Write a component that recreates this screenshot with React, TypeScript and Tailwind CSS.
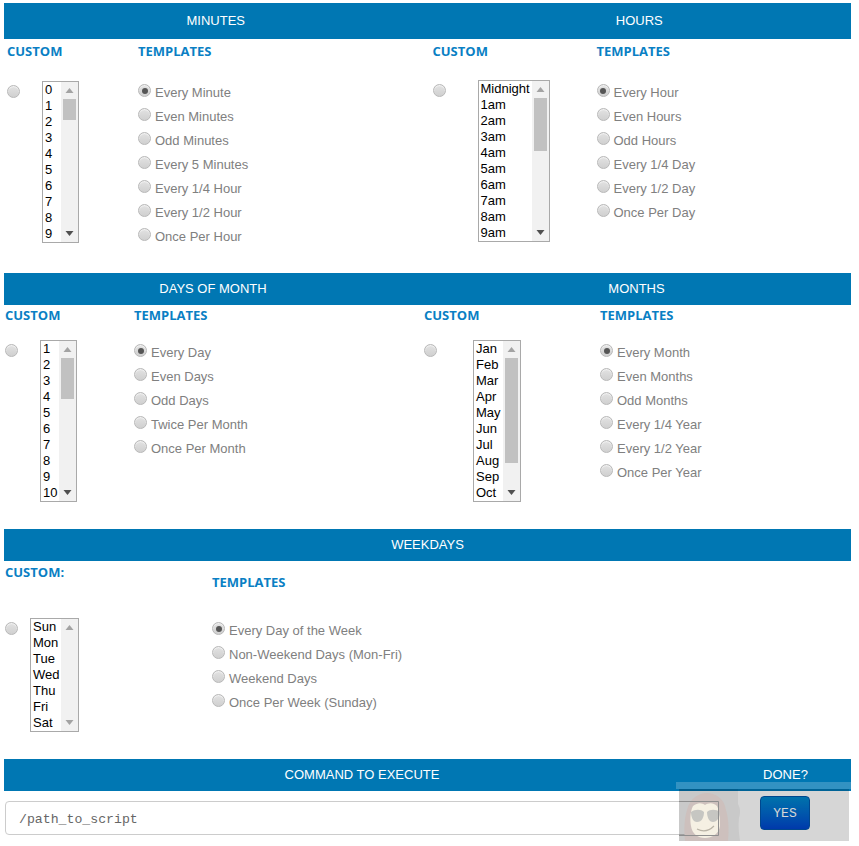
const arial = "font-['Liberation_Sans',Arial,sans-serif]"

function Radio({ checked = false }: { checked?: boolean }) {
  return (
    <span className="mt-[4px] flex h-[13px] w-[13px] shrink-0 items-center justify-center rounded-full border border-[#b8b8b8] bg-linear-to-b from-[#e2e2e2] to-[#d0d0d0] shadow-[inset_0_1px_1px_#f4f4f4]">
      {checked && <span className="h-[6px] w-[6px] rounded-full bg-[#555555]" />}
    </span>
  )
}

function Arrow({ up = false, dim = false }: { up?: boolean; dim?: boolean }) {
  return (
    <svg width="17" height="17" viewBox="0 0 17 17" className="shrink-0">
      <path d={up ? "M8.5 6L12.5 11H4.5Z" : "M8.5 11L12.5 6H4.5Z"} fill={up || dim ? "#a3a3a3" : "#505050"} />
    </svg>
  )
}

type ListProps = {
  items: string[]
  width: string
  thumb?: string
  gapLeft: string
}

function ListBox({ items, width, thumb, gapLeft }: ListProps) {
  return (
    <div className={`${width} ${gapLeft} flex shrink-0 border border-[#a9a9a9] bg-white`}>
      <div className="min-w-0 flex-1 pl-[2px] text-[13px] leading-[16px] text-black whitespace-nowrap">
        {items.map((item) => (
          <div key={item} className="h-[16px]">{item}</div>
        ))}
      </div>
      <div className="flex w-[17px] shrink-0 flex-col bg-[#f1f1f1]">
        <Arrow up />
        {thumb && <div className={`${thumb} mx-[2px] w-[13px] bg-[#c1c1c1]`} />}
        <div className="flex-1" />
        <Arrow dim={!thumb} />
      </div>
    </div>
  )
}

type PanelProps = {
  customLabel?: string
  customClass: string
  customHead: string
  topGap: string
  templatesHead: string
  templates: string[]
  list: ListProps
}

function Panel({ customLabel = "CUSTOM", customClass, customHead, topGap, templatesHead, templates, list }: PanelProps) {
  const heading = "font-['Open_Sans',sans-serif] text-[13px] font-bold text-[#0a7fc4]"
  return (
    <div className="flex">
      <div className={`${customClass} shrink-0`}>
        <div className={`${customHead} ${heading}`}>{customLabel}</div>
        <div className={`${topGap} flex items-start`}>
          <Radio />
          <ListBox {...list} />
        </div>
      </div>
      <div>
        <div className={`${templatesHead} ${heading}`}>TEMPLATES</div>
        {templates.map((label, i) => (
          <div key={label} className="flex h-[24px] items-start gap-[4px] text-[13px] leading-[24px] text-[#808080]">
            <Radio checked={i === 0} />
            <span className="pt-[1px]">{label}</span>
          </div>
        ))}
      </div>
    </div>
  )
}

function Bar({ children, className }: { children: React.ReactNode; className: string }) {
  return (
    <div className={`${className} grid bg-[#0077b3] text-center text-[13px] text-white`}>
      {children}
    </div>
  )
}

function Monkey() {
  return (
    <svg viewBox="679 789 170 52" width="170" height="52" className="absolute top-0 left-0">
      <path d="M679 789H738V804C740 808 741 812 739 818C738 826 739 834 740 841H679Z" fill="#000" fillOpacity="0.06" />
      <path d="M685 841C684 830 684 820 687 810C690 798 699 793 707 793C715 793 724 798 726 810C729 820 729 832 728 841Z" fill="#cdc0bd" />
      <path d="M693 806C698 802 702 803 705 805C708 803 713 802 717 806C720 812 720 820 720 826C719 834 712 838 705 838C698 838 692 834 691 826C690 820 690 812 693 806Z" fill="#f5f0e3" />
      <path d="M691 812C695 809 701 809 704 812C704 817 702 822 697 822C693 822 691 817 691 812ZM707 812C710 809 716 809 720 812C720 817 717 822 713 822C709 822 707 817 707 812Z" fill="#c6c6c2" />
      <path d="M697 829C703 832 709 831 714 826" fill="none" stroke="#b9b3a6" strokeWidth="1.2" />
      <path d="M679 801.5H718.5V835.5H679" fill="none" stroke="#8f8f8f" />
    </svg>
  )
}

export default function App() {
  return (
    <div className={`${arial} relative min-h-[846px] bg-white`}>
      <div className="ml-[4px] w-[847px] pt-[3px]">
        <Bar className="h-[36px] grid-cols-2 items-center">
          <div>MINUTES</div>
          <div>HOURS</div>
        </Bar>
        <div className="grid h-[234px] grid-cols-2">
          <Panel
            customClass="w-[134px] pl-[3px]"
            customHead="h-[24px] leading-[24px]"
            topGap="mt-[18px]"
            templatesHead="h-[41px] leading-[24px]"
            templates={["Every Minute", "Even Minutes", "Odd Minutes", "Every 5 Minutes", "Every 1/4 Hour", "Every 1/2 Hour", "Once Per Hour"]}
            list={{
              items: ["0", "1", "2", "3", "4", "5", "6", "7", "8", "9"],
              width: "w-[37px]",
              thumb: "h-[21px]",
              gapLeft: "ml-[22px]",
            }}
          />
          <Panel
            customClass="w-[169px] pl-[5px]"
            customHead="h-[24px] leading-[24px]"
            topGap="mt-[17px]"
            templatesHead="h-[41px] leading-[24px]"
            templates={["Every Hour", "Even Hours", "Odd Hours", "Every 1/4 Day", "Every 1/2 Day", "Once Per Day"]}
            list={{
              items: ["Midnight", "1am", "2am", "3am", "4am", "5am", "6am", "7am", "8am", "9am"],
              width: "w-[72px]",
              thumb: "h-[53px]",
              gapLeft: "ml-[32px]",
            }}
          />
        </div>

        <Bar className="h-[32px] grid-cols-[418px_429px] items-center">
          <div>DAYS OF MONTH</div>
          <div>MONTHS</div>
        </Bar>
        <div className="grid h-[224px] grid-cols-[418px_429px]">
          <Panel
            customClass="w-[130px] pl-[1px]"
            customHead="h-[20px] leading-[20px]"
            topGap="mt-[15px]"
            templatesHead="h-[35px] leading-[20px]"
            templates={["Every Day", "Even Days", "Odd Days", "Twice Per Month", "Once Per Month"]}
            list={{
              items: ["1", "2", "3", "4", "5", "6", "7", "8", "9", "10"],
              width: "w-[37px]",
              thumb: "h-[41px]",
              gapLeft: "ml-[22px]",
            }}
          />
          <Panel
            customClass="w-[178px] pl-[2px]"
            customHead="h-[20px] leading-[20px]"
            topGap="mt-[15px]"
            templatesHead="h-[35px] leading-[20px]"
            templates={["Every Month", "Even Months", "Odd Months", "Every 1/4 Year", "Every 1/2 Year", "Once Per Year"]}
            list={{
              items: ["Jan", "Feb", "Mar", "Apr", "May", "Jun", "Jul", "Aug", "Sep", "Oct"],
              width: "w-[48px]",
              thumb: "h-[105px]",
              gapLeft: "ml-[36px]",
            }}
          />
        </div>

        <Bar className="h-[32px] items-center">
          <div>WEEKDAYS</div>
        </Bar>
        <div className="h-[198px]">
          <Panel
            customLabel="CUSTOM:"
            customClass="w-[208px] pl-[1px]"
            customHead="h-[22px] leading-[22px]"
            topGap="mt-[35px]"
            templatesHead="h-[57px] pt-[10px] leading-[22px]"
            templates={["Every Day of the Week", "Non-Weekend Days (Mon-Fri)", "Weekend Days", "Once Per Week (Sunday)"]}
            list={{
              items: ["Sun", "Mon", "Tue", "Wed", "Thu", "Fri", "Sat"],
              width: "w-[49px]",
              gapLeft: "ml-[12px]",
            }}
          />
        </div>

        <Bar className="h-[32px] grid-cols-[716px_131px] items-center">
          <div>COMMAND TO EXECUTE</div>
          <div>DONE?</div>
        </Bar>
        <div className="flex items-start">
          <div className="mt-[10px] ml-[1px] flex h-[34px] w-[714px] items-center rounded-[4px] border border-[#cccccc] pt-[3px] pl-[13px] font-['Liberation_Mono',monospace] text-[13.2px] text-[#666666]">
            /path_to_script
          </div>
          <button className="mt-[5px] ml-[41px] h-[34px] w-[50px] rounded-[4px] border border-[#0055aa] bg-linear-to-b from-[#0088cc] to-[#0044cc] pt-[2px] font-['Liberation_Mono',monospace] text-[13px] text-white">
            YES
          </button>
        </div>
      </div>

      <div className="absolute top-[782px] left-[676px] w-[175px]">
        <div className="h-[7px] bg-white/20" />
        <div className="relative ml-[3px] h-[52px] w-[170px] bg-black/16">
          <Monkey />
        </div>
      </div>
    </div>
  )
}
